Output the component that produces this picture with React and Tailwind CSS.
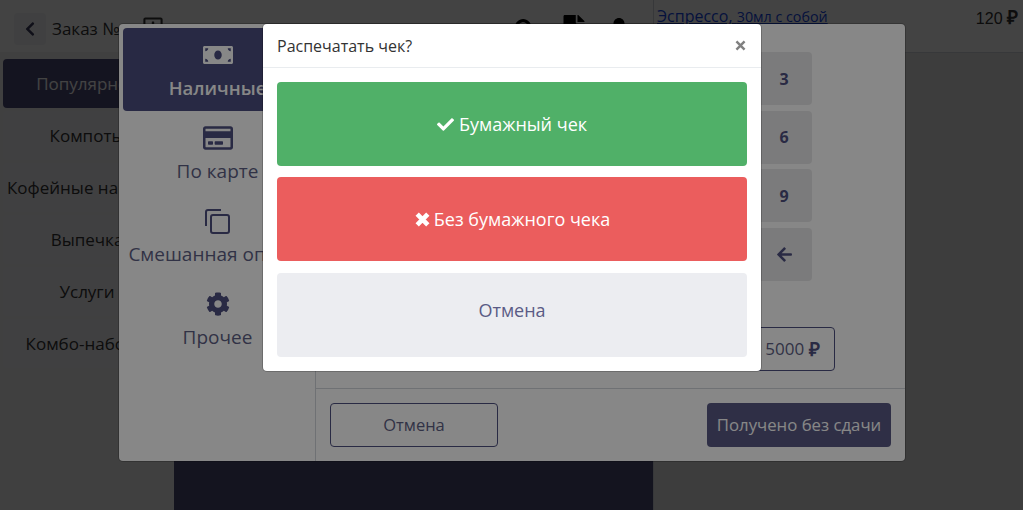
import React from 'react';
import { FaCheck, FaMoneyBill, FaRegCreditCard, FaCog, FaArrowLeft, FaChevronLeft, FaSearch, FaFile, FaUser, FaRegPlusSquare } from 'react-icons/fa';

const categories = ['Популярное', 'Компоты', 'Кофейные напитки', 'Выпечка', 'Услуги', 'Комбо-наборы'];

const keys = ['1', '2', '3', '4', '5', '6', '7', '8', '9', '0', '00'];

// font awesome 4 style close mark, the react-icons one is too thin
const CloseMark = ({ size, width }) => (
    <svg width={size} height={size} viewBox="0 0 16 16" fill="none" stroke="currentColor" strokeWidth={width}>
        <path d="M3 3 13 13M13 3 3 13" />
    </svg>
);

const CopyIcon = () => (
    <svg width="27" height="27" viewBox="0 0 27 27" fill="none" stroke="currentColor" strokeWidth="2">
        <path d="M17 2H4a2 2 0 0 0-2 2v14" />
        <rect x="7" y="7" width="18" height="18" rx="2" />
    </svg>
);

const payTypes = [
    { icon: <FaRegCreditCard size={30} />, label: 'По карте' },
    { icon: <CopyIcon />, label: 'Смешанная оплата' },
    { icon: <FaCog size={24} />, label: 'Прочее' },
];

const App = () => {
    return (
        <div className="relative h-[510px] w-[1023px] overflow-hidden bg-white font-['Open_Sans',sans-serif] text-[#555]">
            {/* Page under the dialogs */}
            <div className="flex h-full">
                <div className="flex w-[653px] flex-col">
                    <div className="flex h-[52px] items-center pl-[14px] pr-[23px] pt-[5px]">
                        <button className="flex h-[32px] w-[32px] items-center justify-center rounded bg-gray-100 text-[#3b3b5c]">
                            <FaChevronLeft size={16} />
                        </button>
                        <span className="ml-[6px] text-[17px] text-[#333]">Заказ №</span>
                        <FaRegPlusSquare size={22} className="mb-[4px] ml-[22px] text-[#333]" />
                        <div className="ml-auto flex items-center text-black">
                            <FaSearch size={20} />
                            <FaFile size={28} className="ml-[25px]" />
                            <FaUser size={22} className="ml-[20px]" />
                        </div>
                    </div>
                    <div className="flex flex-1">
                        <div className="flex w-[174px] flex-col bg-[#f5f5f5] px-[3px] pt-[7px]">
                            {categories.map((name, i) => (
                                <div
                                    key={name}
                                    className={`mb-[3px] flex h-[49px] shrink-0 items-center justify-center whitespace-nowrap rounded text-[17px] ${i === 0 ? 'bg-[#4f4f7a] text-white' : 'bg-gray-100 text-[#333]'}`}
                                >
                                    {name}
                                </div>
                            ))}
                        </div>
                        <div className="flex-1 bg-[#4f4f78]" />
                    </div>
                </div>
                <div className="flex flex-1 flex-col border-l border-gray-300 bg-[#e6e7e8]">
                    <div className="flex h-[53px] items-start justify-between border-b border-gray-300 bg-white pl-[3px] pr-[5px] pt-[4px]">
                        <span className="text-base text-blue-700 underline">Эспрессо, <span className="text-[14.3px]">30мл с собой</span></span>
                        <span className="font-['Liberation_Sans',sans-serif] text-base text-[#333]">120 <b className="text-[19px]">₽</b></span>
                    </div>
                </div>
            </div>

            <div className="absolute inset-0 bg-black/50" />

            {/* Payment dialog */}
            <div className="absolute left-[119px] top-[24px] flex h-[437px] w-[786px] rounded bg-white shadow-[0_0_0_1px_rgba(0,0,0,0.2)]">
                <div className="flex w-[197px] shrink-0 flex-col overflow-hidden border-r border-gray-300 py-1 pl-1">
                    <div className="flex h-[83px] w-[192px] shrink-0 flex-col items-center rounded-l bg-[#4c4e80] pr-[3px] pt-[13px] text-white">
                        <div className="flex h-[28px] items-center"><FaMoneyBill size={30} /></div>
                        <span className="mt-[6px] whitespace-nowrap text-[18.5px] font-semibold leading-[26px]">Наличные</span>
                    </div>
                    {payTypes.map((p) => (
                        <div key={p.label} className="flex h-[83px] w-[192px] shrink-0 flex-col items-center pr-[3px] pt-[13px] text-[#4f5080]">
                            <div className="flex h-[28px] items-center">{p.icon}</div>
                            <span className="mt-[6px] whitespace-nowrap text-[19px] leading-[26px] text-[#5e5f85]">{p.label}</span>
                        </div>
                    ))}
                </div>
                <div className="flex flex-1 flex-col">
                    <div className="relative flex-1">
                        <div className="absolute left-[321px] top-[28px] grid w-[175px] grid-cols-3 gap-x-[4px] gap-y-[5.67px]">
                            {keys.map((k) => (
                                <div key={k} className="flex h-[53px] items-center justify-center rounded bg-[#e9e9ea] font-bold text-[#4f5080]">{k}</div>
                            ))}
                            <div className="flex h-[53px] items-center justify-center rounded bg-[#e9e9ea] text-[#4f5080]"><FaArrowLeft size={17} /></div>
                        </div>
                        <div className="absolute left-[434px] top-[303px] flex h-[44px] w-[85px] items-center justify-center rounded border border-[#4f5080] text-[17px] text-[#5e5f85]">5000&nbsp;<b className="text-[19px] leading-none text-[#4f5080]">₽</b></div>
                    </div>
                    <div className="flex h-[73px] items-center justify-between border-t border-gray-300 px-[14px]">
                        <button className="h-[44px] w-[168px] rounded border border-[#4f5080] text-[16.5px] text-[#5e5f85]">Отмена</button>
                        <button className="h-[44px] w-[184px] rounded bg-[#595a85] text-[16.75px] font-medium text-white">Получено без сдачи</button>
                    </div>
                </div>
            </div>

            <div className="absolute inset-0 bg-black/[0.47]" />

            {/* Receipt dialog */}
            <div className="absolute left-[263px] top-[24px] w-[498px] rounded bg-white shadow-[0_0_0_1px_rgba(0,0,0,0.2)]">
                <div className="flex h-[44px] items-center justify-between border-b border-[#e9ecef] pl-[14px] pr-[14px]">
                    <span className="text-base text-[#333]">Распечатать чек?</span>
                    <span className="text-[#808080]"><CloseMark size={13} width={3} /></span>
                </div>
                <div className="flex flex-col gap-[11px] p-[14px]">
                    <button className="flex h-[84px] items-center justify-center gap-[5px] rounded bg-[#50b068] text-lg font-medium text-white">
                        <FaCheck size={17} />
                        Бумажный чек
                    </button>
                    <button className="flex h-[84px] items-center justify-center gap-[3px] rounded bg-[#eb5d5d] text-lg font-medium text-white">
                        <CloseMark size={17} width={4.4} />
                        Без бумажного чека
                    </button>
                    <button className="mt-px flex h-[84px] items-center justify-center rounded bg-[#ecedf1] pb-[10px] text-lg text-[#5a5b85]">Отмена</button>
                </div>
            </div>
        </div>
    );
};

export default App;
